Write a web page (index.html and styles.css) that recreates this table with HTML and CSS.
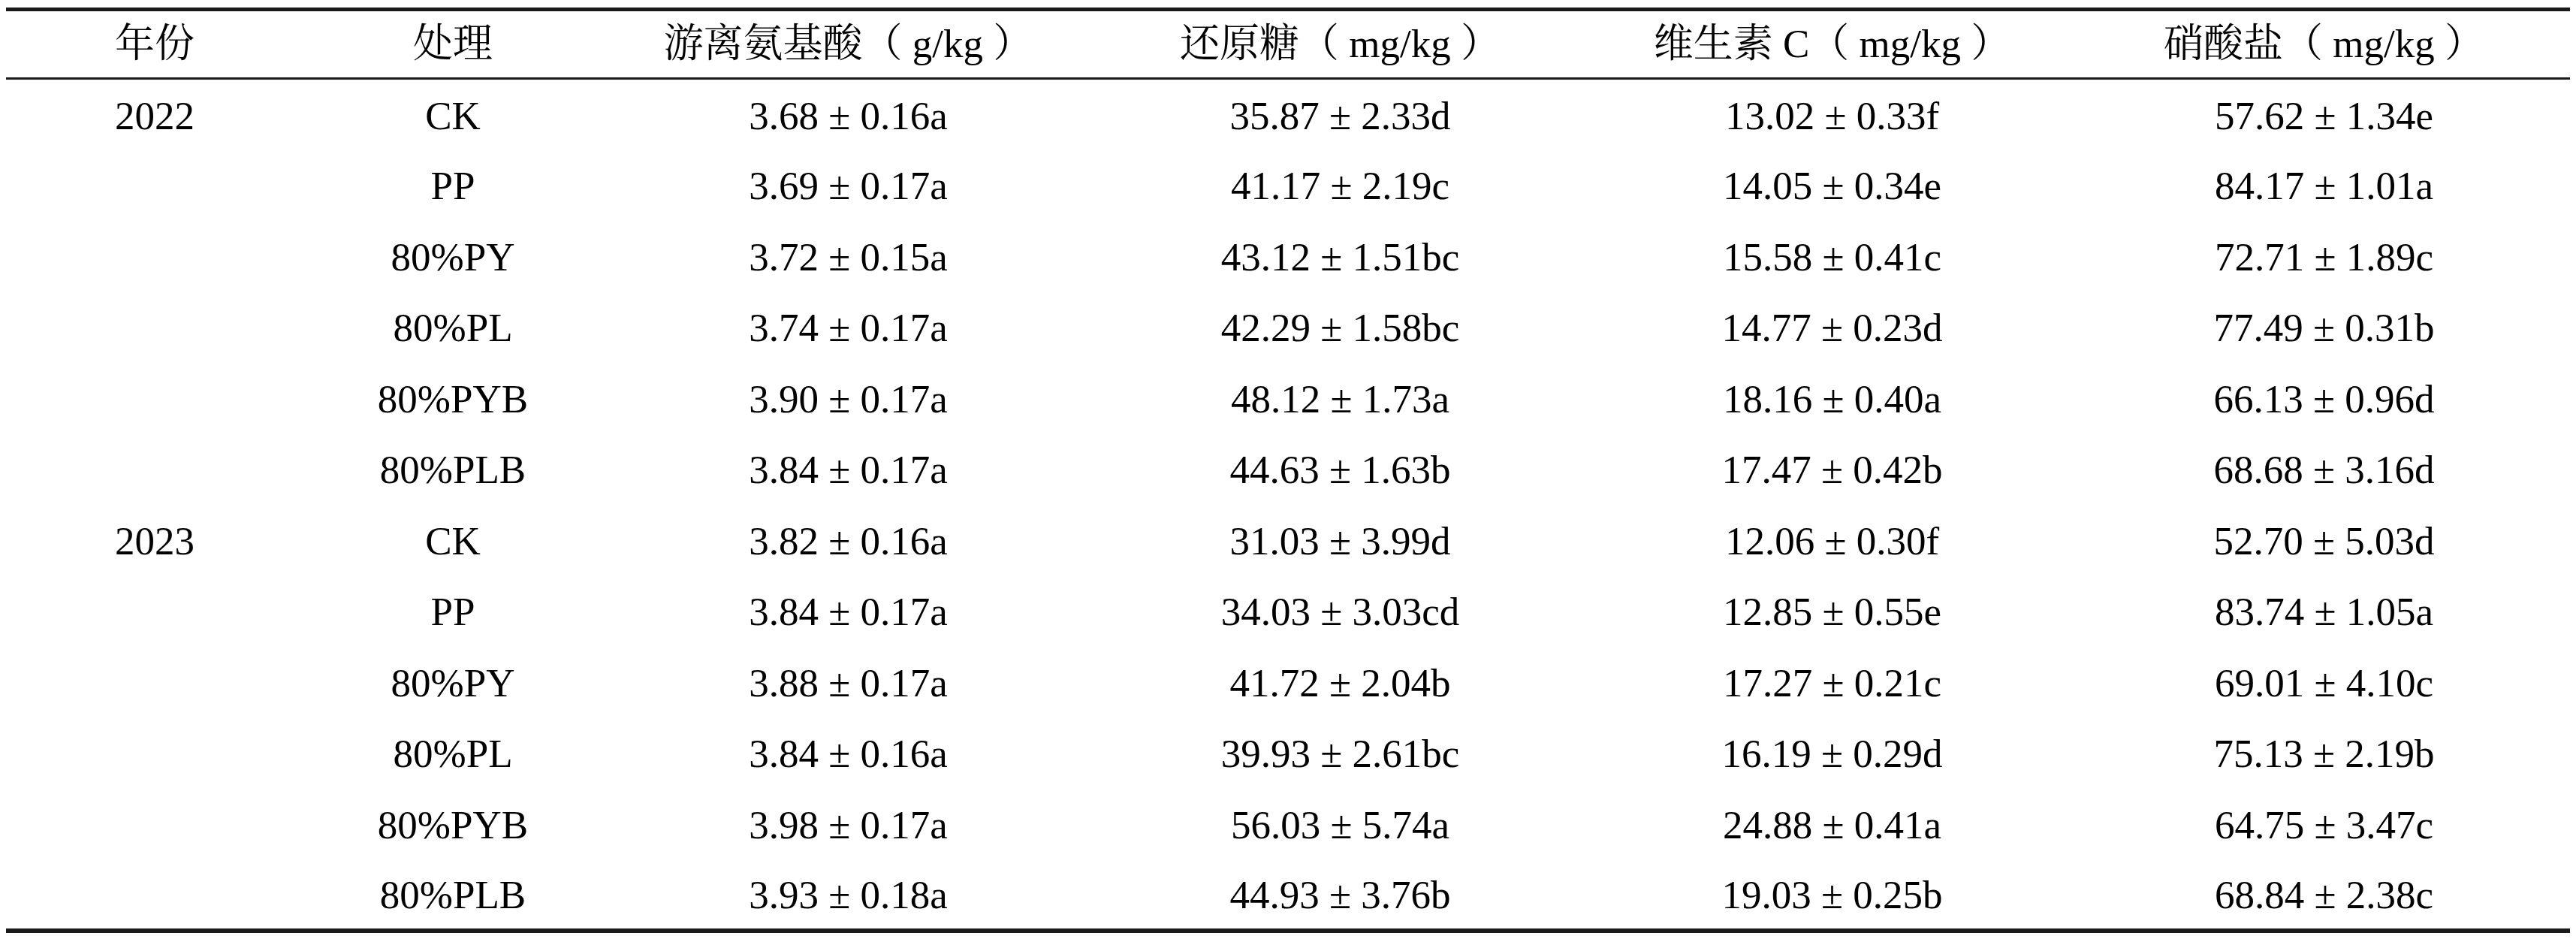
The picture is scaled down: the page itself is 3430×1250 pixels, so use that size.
FILE: index.html
```html
<!DOCTYPE html>
<html lang="zh-CN">
<head>
<meta charset="utf-8">
<title>表</title>
<link rel="stylesheet" href="styles.css">
</head>
<body>
<table class="data-table">
  <colgroup>
    <col class="c-year">
    <col class="c-treat">
    <col class="c-val">
    <col class="c-val">
    <col class="c-val">
    <col class="c-val">
  </colgroup>
  <thead>
    <tr class="head-row">
      <th>年份</th>
      <th>处理</th>
      <th>游离氨基酸（ g/kg ）</th>
      <th>还原糖（ mg/kg ）</th>
      <th>维生素 C（ mg/kg ）</th>
      <th>硝酸盐（ mg/kg ）</th>
    </tr>
  </thead>
  <tbody>
    <tr><td>2022</td><td>CK</td><td>3.68 ± 0.16a</td><td>35.87 ± 2.33d</td><td>13.02 ± 0.33f</td><td>57.62 ± 1.34e</td></tr>
    <tr><td></td><td>PP</td><td>3.69 ± 0.17a</td><td>41.17 ± 2.19c</td><td>14.05 ± 0.34e</td><td>84.17 ± 1.01a</td></tr>
    <tr><td></td><td>80%PY</td><td>3.72 ± 0.15a</td><td>43.12 ± 1.51bc</td><td>15.58 ± 0.41c</td><td>72.71 ± 1.89c</td></tr>
    <tr><td></td><td>80%PL</td><td>3.74 ± 0.17a</td><td>42.29 ± 1.58bc</td><td>14.77 ± 0.23d</td><td>77.49 ± 0.31b</td></tr>
    <tr><td></td><td>80%PYB</td><td>3.90 ± 0.17a</td><td>48.12 ± 1.73a</td><td>18.16 ± 0.40a</td><td>66.13 ± 0.96d</td></tr>
    <tr><td></td><td>80%PLB</td><td>3.84 ± 0.17a</td><td>44.63 ± 1.63b</td><td>17.47 ± 0.42b</td><td>68.68 ± 3.16d</td></tr>
    <tr><td>2023</td><td>CK</td><td>3.82 ± 0.16a</td><td>31.03 ± 3.99d</td><td>12.06 ± 0.30f</td><td>52.70 ± 5.03d</td></tr>
    <tr><td></td><td>PP</td><td>3.84 ± 0.17a</td><td>34.03 ± 3.03cd</td><td>12.85 ± 0.55e</td><td>83.74 ± 1.05a</td></tr>
    <tr><td></td><td>80%PY</td><td>3.88 ± 0.17a</td><td>41.72 ± 2.04b</td><td>17.27 ± 0.21c</td><td>69.01 ± 4.10c</td></tr>
    <tr><td></td><td>80%PL</td><td>3.84 ± 0.16a</td><td>39.93 ± 2.61bc</td><td>16.19 ± 0.29d</td><td>75.13 ± 2.19b</td></tr>
    <tr><td></td><td>80%PYB</td><td>3.98 ± 0.17a</td><td>56.03 ± 5.74a</td><td>24.88 ± 0.41a</td><td>64.75 ± 3.47c</td></tr>
    <tr><td></td><td>80%PLB</td><td>3.93 ± 0.18a</td><td>44.93 ± 3.76b</td><td>19.03 ± 0.25b</td><td>68.84 ± 2.38c</td></tr>
  </tbody>
</table>
</body>
</html>
```

FILE: styles.css
```css
html, body {
  background: #ffffff;
}

body {
  margin: 10px 8px 0 8px;
  color: #000000;
  font-family: "Liberation Serif", "Noto Serif CJK SC", "Source Han Serif SC", "AR PL UMing CN", "Noto Sans CJK SC", serif;
  font-size: 53px;
}

.data-table {
  width: 3414px;
  border-collapse: collapse;
  table-layout: fixed;
  border-top: 5px solid #1a1a1a;
  border-bottom: 6px solid #1a1a1a;
}

.c-year { width: 396px; }
.c-treat { width: 398px; }
.c-val { width: 655px; }

.data-table th,
.data-table td {
  padding: 0;
  text-align: center;
  vertical-align: middle;
  font-weight: normal;
  line-height: 1.2;
  white-space: pre;
}

.head-row {
  height: 92px;
}

.head-row th {
  border-bottom: 3px solid #1a1a1a;
}

.data-table tbody tr {
  height: 94.5px;
}

.data-table tbody td {
  padding-top: 4px;
}
```
